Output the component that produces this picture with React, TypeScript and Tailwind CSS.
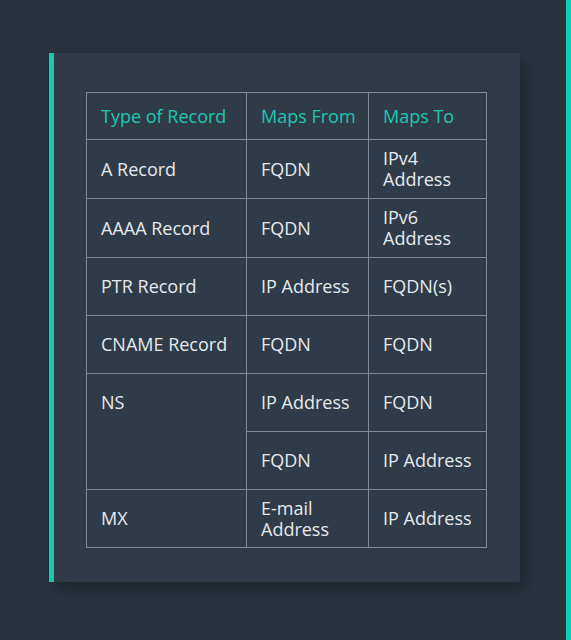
const rows: { type: string; from: string; to: string; h: string }[] = [
  { type: "A Record", from: "FQDN", to: "IPv4\nAddress", h: "h-[59px]" },
  { type: "AAAA Record", from: "FQDN", to: "IPv6\nAddress", h: "h-[59px]" },
  { type: "PTR Record", from: "IP Address", to: "FQDN(s)", h: "h-[58px]" },
  { type: "CNAME Record", from: "FQDN", to: "FQDN", h: "h-[58px]" },
];

const cell = "border border-[#7f8a95] pl-[14px] pr-[4px] align-middle whitespace-pre-line leading-[21px]";
const head = "border border-[#7f8a95] pl-[14px] pr-0 align-middle whitespace-nowrap font-normal";

const App = () => (
  <div className="relative w-[571px] h-[640px] overflow-hidden bg-[#29333e] font-['Open_Sans',sans-serif] text-[18px]">
    <div className="absolute right-0 top-0 h-full w-[5px] bg-[#19c9b4]" />
    <div className="pt-[53px] pl-[49px]">
      <div className="w-[471px] h-[529px] border-l-[5px] border-[#19c9b4] bg-[#2f3b48] shadow-[6px_8px_14px_rgba(0,0,0,0.25)] pt-[39px] pl-[32px]">
        <table className="w-[400px] border-collapse table-fixed text-[#e6eaee]">
          <colgroup>
            <col className="w-[160px]" />
            <col className="w-[122px]" />
            <col className="w-[118px]" />
          </colgroup>
          <thead>
            <tr className="h-[47px] text-[#1ec6b1] text-left">
              <th className={head}>Type of Record</th>
              <th className={head}>Maps From</th>
              <th className={head}>Maps To</th>
            </tr>
          </thead>
          <tbody>
            {rows.map((r) => (
              <tr key={r.type} className={r.h}>
                <td className={cell}>{r.type}</td>
                <td className={cell}>{r.from}</td>
                <td className={cell}>{r.to}</td>
              </tr>
            ))}
            <tr className="h-[58px]">
              <td rowSpan={2} className="border border-[#7f8a95] px-[14px] align-top pt-[18px] leading-[21px]">NS</td>
              <td className={cell}>IP Address</td>
              <td className={cell}>FQDN</td>
            </tr>
            <tr className="h-[58px]">
              <td className={cell}>FQDN</td>
              <td className={cell}>IP Address</td>
            </tr>
            <tr className="h-[58px]">
              <td className={cell}>MX</td>
              <td className={cell}>{"E-mail\nAddress"}</td>
              <td className={cell}>IP Address</td>
            </tr>
          </tbody>
        </table>
      </div>
    </div>
  </div>
);

export default App;
